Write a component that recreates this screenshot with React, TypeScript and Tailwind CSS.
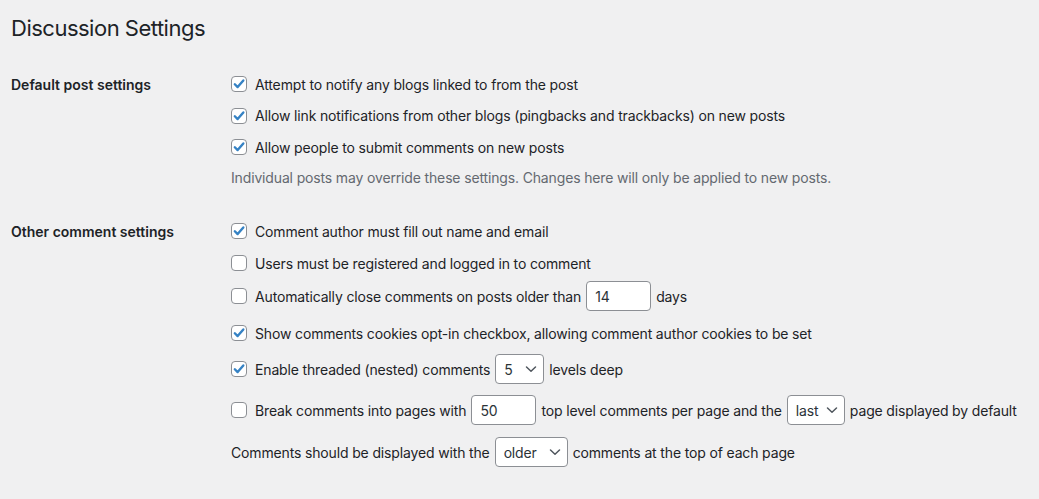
import React from "react";

const Check = ({ checked }: { checked: boolean }) => (
  <span className="relative flex h-4 w-4 shrink-0 items-center justify-center rounded-[4px] border border-[#8c8f94] bg-white">
    {checked && (
      <svg width="16" height="16" viewBox="0 0 20 20" className="absolute">
        <path d="M4.8 10.3 L8.3 13.8 L15.4 5.6" fill="none" stroke="#3582c4" strokeWidth="3" strokeLinecap="round" strokeLinejoin="round" />
      </svg>
    )}
  </span>
);

const TextInput = ({ value, w }: { value: string; w: string }) => (
  <span className={`mx-[5px] flex h-[30px] ${w} items-center rounded-[4px] border border-[#8c8f94] bg-white px-2 text-[#2c3338]`}>
    {value}
  </span>
);

const Select = ({ value, w }: { value: string; w: string }) => (
  <span className={`mx-[5px] flex h-[30px] ${w} items-center justify-between rounded-[4px] border border-[#8c8f94] bg-white pl-2 pr-[5px] text-[#2c3338]`}>
    <span>{value}</span>
    <svg width="14" height="14" viewBox="0 0 14 14">
      <path d="M2.5 5 L7 9.2 L11.5 5" fill="none" stroke="#50575e" strokeWidth="1.5" strokeLinecap="round" strokeLinejoin="round" />
    </svg>
  </span>
);

const Row = ({ h, children }: { h: string; children: React.ReactNode }) => (
  <div className={`flex ${h} items-center`}>{children}</div>
);

const Opt = ({ checked, children }: { checked: boolean; children: React.ReactNode }) => (
  <>
    <Check checked={checked} />
    <span className="ml-2 flex items-center whitespace-nowrap">{children}</span>
  </>
);

export default function App() {
  return (
    <div
      className="min-h-[499px] w-[1039px] bg-[#f0f0f1] text-[14px] text-[#1d2327]"
      style={{ fontFamily: "Inter, 'Noto Sans', sans-serif" }}
    >
      <div className="flex h-[56px] items-center pl-[11px] text-[22px] font-normal tracking-[-0.5px]">Discussion Settings</div>
      <div className="pt-[12px]">
        <div className="flex">
          <div className="w-[231px] pl-[11px]">
            <div className="flex h-[32px] items-center font-semibold">Default post settings</div>
          </div>
          <div className="flex flex-col tracking-[-0.15px]">
            <Row h="h-[32px]">
              <Opt checked>Attempt to notify any blogs linked to from the post</Opt>
            </Row>
            <Row h="h-[31px]">
              <Opt checked>Allow link notifications from other blogs (pingbacks and trackbacks) on new posts</Opt>
            </Row>
            <Row h="h-[32px]">
              <Opt checked>Allow people to submit comments on new posts</Opt>
            </Row>
            <Row h="h-[28px]">
              <span className="text-[#646970]">
                Individual posts may override these settings. Changes here will only be applied to new posts.
              </span>
            </Row>
          </div>
        </div>
        <div className="mt-[24px] flex">
          <div className="w-[231px] pl-[11px]">
            <div className="flex h-[32px] items-center font-semibold">Other comment settings</div>
          </div>
          <div className="flex flex-col tracking-[-0.15px]">
            <Row h="h-[32px]">
              <Opt checked>Comment author must fill out name and email</Opt>
            </Row>
            <Row h="h-[32px]">
              <Opt checked={false}>Users must be registered and logged in to comment</Opt>
            </Row>
            <Row h="h-[34px]">
              <Opt checked={false}>
                Automatically close comments on posts older than
                <TextInput value="14" w="w-[65px]" />
                days
              </Opt>
            </Row>
            <Row h="h-[40px]">
              <Opt checked>Show comments cookies opt-in checkbox, allowing comment author cookies to be set</Opt>
            </Row>
            <Row h="h-[32px]">
              <Opt checked>
                Enable threaded (nested) comments
                <Select value="5" w="w-[49px]" />
                levels deep
              </Opt>
            </Row>
            <Row h="h-[50px]">
              <Opt checked={false}>
                Break comments into pages with
                <TextInput value="50" w="w-[65px]" />
                top level comments per page and the
                <Select value="last" w="w-[58px]" />
                page displayed by default
              </Opt>
            </Row>
            <Row h="h-[34px]">
              <span className="flex items-center whitespace-nowrap">
                Comments should be displayed with the
                <Select value="older" w="w-[73px]" />
                comments at the top of each page
              </span>
            </Row>
          </div>
        </div>
      </div>
    </div>
  );
}
